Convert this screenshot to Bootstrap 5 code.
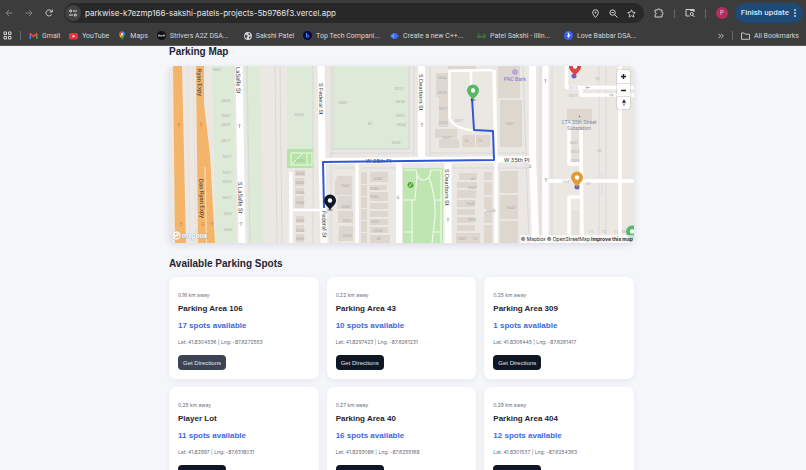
<!DOCTYPE html>
<html lang="en">
<head>
<meta charset="utf-8">
<meta name="viewport" content="width=device-width, initial-scale=1">
<title>Parkwise</title>
<link href="https://cdn.jsdelivr.net/npm/bootstrap@5.3.0/dist/css/bootstrap.min.css" rel="stylesheet">
<style>
body{font-family:"Liberation Sans",Arial,sans-serif;background:#f5f6fa;color:#1f2431}
.chrome{background:#3c3c3c;color:#d6d6d6;font-family:Inter,sans-serif;border-bottom:1px solid #585858}
.chrome svg{display:block;flex:none}
.chrome button{border:0;padding:0;color:inherit;display:block}
.chrome button:not(.avatar):not(.update):not(.tune){background:none}
.bar-top{height:26px;padding:0 3px 0 5px}
.nav-set{gap:12px;padding-right:3px}
.omni{background:#282828;border-radius:10px;height:20px;padding:0 8px 0 1px}
.omni input{background:none;border:0;outline:0;color:#e4e4e4;font-size:8px;line-height:12px;padding:0;min-width:0}
.omni-tools{gap:9px}
.chrome .tune{background:#424242;border-radius:50%;padding:4px}
.side-set{gap:10px;padding-left:10px}
.rule{width:1px;height:9px;background:#686868;flex:none}
.bar-marks .rule{margin:0 -1px}
.avatar{width:12px;height:12px;border-radius:50%;background:#b52d5c;font-size:6px;line-height:12px;text-align:center}
.chrome .update{background:#1f4a75;color:#d3e6fa;border-radius:10px;height:20px;font-family:Roboto,sans-serif;font-size:8px;font-weight:500;padding:0 7px 0 6px;margin-left:-3px;display:flex;align-items:center;gap:5px}
.bar-marks{height:19px;padding:0 7px 0 3px;gap:9px;font-family:Roboto,sans-serif;font-size:7px;line-height:10px}
.bar-marks a{color:#d6d6d6;text-decoration:none;display:flex;align-items:center;gap:4px;white-space:nowrap;flex:none}
.bar-marks a.long{width:78px}
.page{padding-right:3px}
.wrap{max-width:465px}
.page h1,.page h2{font-size:10px;font-weight:700;line-height:12px;margin:0}
.page h1{margin-bottom:8px}
.page h2{margin:15px 0 7px}
.map{border-radius:6px;overflow:hidden;box-shadow:0 2px 6px #1f24311f;background:#ebe8e4}
.map>svg{display:block;width:100%;height:auto}
.map text{font-family:Roboto,sans-serif}
.zoomer{top:4px;right:4px;width:13px;background:#fff;border-radius:3px;box-shadow:0 0 1px 1px #0000001a}
.zoomer button{border:0;background:none;height:13px;padding:0;width:100%;display:flex;align-items:center;justify-content:center}
.zoomer button+button{border-top:1px solid #ddd}
.credit{right:0;bottom:0;background:#ffffffa0;font-size:5px;font-family:Inter,sans-serif;line-height:8px;padding:0 1px;gap:1px}
.credit a{color:#333;text-decoration:none}
.spots{--bs-gutter-x:8px;--bs-gutter-y:8px}
.spot{border:0;border-radius:7px;box-shadow:0 2px 6px #1f24310f;padding:14px 9px 9px;align-items:flex-start}
.tiny{font-family:Inter,sans-serif;font-size:5px;line-height:8px;color:#666b75}
.spot h3{font-size:8px;font-weight:700;line-height:10px;margin:5px 0 7px}
.free{font-weight:700;font-size:8px;line-height:10px;color:#4169dc;margin-bottom:7px}
.go{background:#0f1624;color:#e3e5e9;font-size:6px;line-height:8px;padding:3px 4px;min-width:48px;border-radius:4px;border:0;height:15px;margin-top:9px}
.go:hover{background:#3a414f;color:#fff}
.go.lit{background:#3c4453}
</style>
<script src="https://cdn.jsdelivr.net/npm/bootstrap@5.3.0/dist/js/bootstrap.bundle.min.js"></script>
</head>
<body class="vh-100 overflow-hidden d-flex flex-column">
<header class="chrome flex-shrink-0">
 <div class="bar-top d-flex align-items-center">
  <div class="nav-set d-flex align-items-center">
   <button aria-label="Back"><svg width="8" height="8" viewBox="0 0 8 8" fill="none" stroke="#858585"><path d="M7.5 4H1M4 1L1 4l3 3"/></svg></button>
   <button aria-label="Forward"><svg width="8" height="8" viewBox="0 0 8 8" fill="none" stroke="#858585"><path d="M.5 4H7M4 1l3 3-3 3"/></svg></button>
   <button aria-label="Reload"><svg width="8" height="8" viewBox="0 0 8 8" fill="none" stroke="#cfcfcf"><path d="M6.6 5.3A3 3 0 1 1 6.4 2.2L7 3M7.2.5V3H4.8"/></svg></button>
  </div>
  <div class="omni flex-grow-1 d-flex align-items-center ms-2">
   <button class="tune" aria-label="Site information"><svg width="8" height="8" viewBox="0 0 8 8" fill="none" stroke="#dedede"><circle cx="1.7" cy="2" r="1.1"/><path d="M4 2h4M0 6h4"/><circle cx="6.3" cy="6" r="1.1"/></svg></button>
   <input class="flex-grow-1 ms-1" type="text" aria-label="Address" value="parkwise-k7ezmp166-sakshi-patels-projects-5b9766f3.vercel.app">
   <div class="omni-tools d-flex">
    <button aria-label="Location"><svg width="9" height="9" viewBox="0 0 9 9" fill="none" stroke="#d0d0d0"><path d="M4.500 8.500C3 6.600 1.700 5.200 1.700 3.500a2.800 2.800 0 0 1 5.600 0C7.300 5.200 6 6.600 4.500 8.500z"/><circle cx="4.500" cy="3.500" r=".6"/></svg></button>
    <button aria-label="Zoom"><svg width="9" height="9" viewBox="0 0 9 9" fill="none" stroke="#d0d0d0"><circle cx="3.600" cy="3.600" r="2.700"/><path d="M5.600 5.600l3 3M2.400 3.600h2.400"/></svg></button>
    <button aria-label="Bookmark this page"><svg width="9" height="9" viewBox="0 0 9 9" fill="none" stroke="#d0d0d0" stroke-width=".9"><path d="M4.500.8l1.100 2.500 2.700.2-2 1.900.6 2.700-2.400-1.400-2.400 1.400.6-2.700-2-1.900 2.700-.2z"/></svg></button>
   </div>
  </div>
  <div class="side-set d-flex align-items-center">
   <button aria-label="Extensions"><svg width="10" height="10" viewBox="0 0 10 10" fill="none" stroke="#d0d0d0"><path d="M1 2h2.500a1.200 1.200 0 0 1 2.400 0H8v2.400a1.100 1.100 0 0 1 0 2.200V9H1V6.700c1.600-.2 1.600-2.200 0-2.400z"/></svg></button>
   <span class="rule"></span>
   <button aria-label="Search tabs"><svg width="10" height="10" viewBox="0 0 10 10" fill="none" stroke="#d0d0d0"><path d="M4.500 8H1V1.500h8V4"/><path d="M5.500 1.500h3.500v1H5.500z" fill="#d0d0d0"/><circle cx="6.800" cy="6" r="1.500"/><path d="M7.900 7.200L9.500 9"/></svg></button>
   <span class="rule"></span>
   <button class="avatar" aria-label="Profile">P</button>
   <button class="update">Finish update<svg width="2" height="8" viewBox="0 0 2 8" fill="#d3e6fa"><circle cx="1" cy="1" r=".9"/><circle cx="1" cy="4" r=".9"/><circle cx="1" cy="7" r=".9"/></svg></button>
  </div>
 </div>
 <nav class="bar-marks d-flex align-items-center" aria-label="Bookmarks">
  <button aria-label="Apps"><svg width="9" height="9" viewBox="0 0 9 9" fill="none" stroke="#d0d0d0"><path d="M1 1h2.500v2.500H1zM5.500 1H8v2.500H5.500zM1 5.500h2.500V8H1zM5.500 5.500H8V8H5.500z"/></svg></button>
  <span class="rule"></span>
  <a href="#"><svg width="9" height="8" viewBox="0 0 9 8"><path d="M.5 1.500V7H2V2.500z" fill="#4285f4"/><path d="M8.500 1.500V7H7V2.500z" fill="#34a853"/><path d="M.5 2.500V1.300L1.500.8l3 2.500 3-2.500 1 .5v1.200l-4 3z" fill="#ea4335"/></svg>Gmail</a>
  <a href="#"><svg width="9" height="8" viewBox="0 0 9 8"><rect y="1" width="9" height="6.500" rx="1.600" fill="#e5323b"/><path d="M3.600 2.700v3L6.200 4.200z" fill="#fff"/></svg>YouTube</a>
  <a href="#"><svg width="8" height="9" viewBox="0 0 8 9"><path d="M4 9C3.500 6.700 1 5.500 1 3.200h6C7 5.500 4.500 6.700 4 9z" fill="#34a853"/><path d="M1 3.200A3 3 0 0 1 4 .2V3.200L1.700 5z" fill="#ea4335"/><path d="M4 .2a3 3 0 0 1 3 3H4z" fill="#4285f4"/><path d="M1.500 4.800L4 3l.8 1-2 2.400z" fill="#fbbc04"/><circle cx="4" cy="3.100" r="1.100" fill="#fff"/></svg>Maps</a>
  <a href="#" class="long"><svg width="9" height="9" viewBox="0 0 9 9"><circle cx="4.500" cy="4.500" r="4.500" fill="#111"/><path d="M1.500 5.500V4h1.200v1.500M3.700 4v1.200h1.200V4M6 5.500V4h1.600v.8H6" fill="none" stroke="#ddd" stroke-width=".7"/></svg>Strivers A2Z DSA...</a>
  <a href="#"><svg width="8" height="8" viewBox="0 0 8 8"><circle cx="4" cy="4" r="3.900" fill="#d8dadd"/><path d="M1 2.500l2 .4.800 1.400-1 1L3 7 1 5.500zM4.500.8l2 1-.7 1.400-1.500-.6zM5 4.500l2-.2-.8 2-1.200.5z" fill="#4b4e52"/></svg>Sakshi Patel</a>
  <a href="#" class="long"><svg width="9" height="9" viewBox="0 0 9 9"><circle cx="4.500" cy="4.500" r="4.500" fill="#07093e"/><path d="M3.500 2v4.300" stroke="#4c8df5"/><circle cx="4.700" cy="5.200" r="1.200" fill="none" stroke="#4c8df5" stroke-width=".9"/></svg>Top Tech Compani...</a>
  <a href="#" class="long"><svg width="9" height="8" viewBox="0 0 9 8"><path d="M0 4l3-3h3l3 3-3 3H3z" fill="#3d6bea"/><path d="M1 4l3-2v4z" fill="#79a0fa"/></svg>Create a new C++...</a>
  <a href="#" class="long"><svg width="9" height="8" viewBox="0 0 9 8" fill="none" stroke="#3c8148"><path d="M3.300 2.500A1.800 1.800 0 1 0 4 4.300H.5M5.700 2.500A1.800 1.800 0 1 1 5 4.300h3.500"/></svg>Patel Sakshi - Illin...</a>
  <a href="#" class="long"><svg width="9" height="9" viewBox="0 0 9 9"><circle cx="4.500" cy="4.500" r="4.500" fill="#3d61ee"/><path d="M3.200 1.800h2v2h1.300L4.200 7.500v-2H2.800l1.500-2z" fill="#fff"/></svg>Love Babbar DSA...</a>
  <button class="ms-auto" aria-label="More bookmarks"><svg width="6" height="6" viewBox="0 0 6 6" fill="none" stroke="#d0d0d0" stroke-width=".9"><path d="M.5.8L2.700 3 .5 5.200M3.200.8L5.400 3 3.200 5.200"/></svg></button>
  <span class="rule"></span>
  <a href="#"><svg width="9" height="8" viewBox="0 0 9 8" fill="none" stroke="#d0d0d0" stroke-width=".9"><path d="M.5 1h2.800l1 1.200h4.200V7.300h-8z"/></svg>All Bookmarks</a>
 </nav>
</header>
<main class="page flex-grow-1 overflow-hidden">
<div class="wrap mx-auto">
 <h1>Parking Map</h1>
 <section class="map position-relative" aria-label="Map">
 <svg viewBox="169 66 465 177">
  <rect x="169" y="66" width="465" height="177" fill="#ebe8e4"/>
  <!-- expressway -->
  <g fill="#f4b56b"><path d="M173 66h9l4 177h-11z"/><path d="M196 66h8v38l6 50 5 89h-17z"/></g>
  <path d="M205 167l1.500 76" stroke="#f9d9b0" stroke-width="1.200"/>
  <path d="M187 66l3 177M193 66l3 177" stroke="#f1ddd2" stroke-width="1"/>
  <!-- lawns -->
  <g fill="#dcead7"><path d="M212 66h22l2 177h-20z"/><path d="M245 66h15l3 177h-15z"/><path d="M287 66h26v84h-26z"/><path d="M333 66h77v84h-77z"/></g>
  <path d="M287 149h26v19h-26z" fill="#b5e5a4"/>
  <path d="M291 165l12-12h9v12h-21v-12h12M307 153v12" fill="none" stroke="#eff8ec"/>
  <g fill="none" stroke="#d5d3d9" stroke-width=".8"><path d="M275 66l2 177M280 66l2 177M333 66v84M409 66v84M331 66v177M414 66v90M430 66v90M247 66l3 177M313 66v177M333 149h77M330 153h84M430 153h95M333 168h25M362 168h34M451 168h80M552 66v177M523 66l6 177M599 66v177M606 66v177M602 173v22M540 66v177"/></g>
  <!-- streets -->
  <g fill="none" stroke="#fff" stroke-linejoin="round">
   <path d="M239 66l3 177" stroke-width="7"/><path d="M321 66l1 90 2 87" stroke-width="7"/>
   <path d="M421.500 66v94" stroke-width="7"/><path d="M325 161l208-2" stroke-width="6"/>
   <path d="M357 163v80M494 70l2 90v83M291 172v71" stroke-width="3.500"/><path d="M399 163v80" stroke-width="6"/><path d="M448 163v80" stroke-width="7"/>
   <path d="M532.500 66v90l3 87" stroke-width="7"/><path d="M545.500 66v177" stroke-width="6"/>
   <path d="M291 210h33M449.500 118V71l43-1M449.500 118q3 10 24 12.500M471 71v24" stroke-width="2.500"/>
   <path d="M566.500 66v21.500H634M581 87v8h53M620 66v177M545 181h89M569 120v44h12M581 130l1 113M569 243v-46h13" stroke-width="3.500"/>
  </g>
  <!-- buildings -->
  <g fill="#ddd7d0">
   <path d="M436 73h12v24h-12zM439 97h9v30h-9zM435 129h22v9h-22zM439 139h20v9h-20zM462 135h13v12h-13zM476 135h14v12h-14zM448 66h28v3h-28zM498 66h22v32h-22zM500 100h22v47h-22zM567 109h25v12h-25zM500 171h18v22h-18zM500 195h18v24h-18zM500 221h18v22h-18z"/>
   <path d="M337 176h15v19h-17v-13zM338 196h14v13h-15zM338 211h15v12h-15zM339 226h14v15h-15zM361 172h6v12h-6zM361 185h6v11h-6zM361 197h6v11h-6zM361 209h6v11h-6zM361 221h6v11h-6zM361 233h6v10h-6zM370 172h18v10h-18zM370 185h17v5h-17zM370 192h18v9h-18zM370 203h18v6h-18zM370 211h18v6h-18zM370 219h18v6h-18zM370 227h18v6h-18zM370 235h20v8h-20z"/>
   <path d="M459 173h18v7h-18zM457 182h20v6h-20zM457 190h19v8h-19zM457 200h18v7h-18zM457 209h18v6h-18zM457 217h18v6h-18zM457 225h18v6h-18zM456 233h24v10h-24zM484 172h8v8h-8zM484 182h8v13h-8zM484 197h8v12h-8zM484 211h8v12h-8zM484 225h8v18h-8zM295 170h10v6h-10zM295 178h9v8h-9zM295 188h9v6h-9zM295 196h9v12h-9zM296 216h8v7h-8zM296 225h8v7h-8zM296 234h8v8h-8z"/>
   <path d="M572 128h7v34h-7zM572 210h7v33h-7z" opacity=".5"/>
  </g>
  <!-- park -->
  <path d="M403 168h40v75h-40z" fill="#bfe6b0"/>
  <path d="M404 170h12q1 10 7.500 10t7.500-10h11M417 175l-2 25h-12M429 177q7 20 6 40l-3 26M412 200v43M404 232h8M442 200h-7M442 232h-8M441 170v73" fill="none" stroke="#eef8ea" stroke-width="1.200"/>
  <circle cx="410.500" cy="185" r="3" fill="#55a63c"/><path d="M409 187l3-4" stroke="#dff2d7" stroke-width=".9"/>
  <!-- house numbers -->
  <g font-size="4" fill="#b0ada7" text-anchor="middle">
   <text x="217" y="71">3501</text><text x="226" y="102">3505</text><text x="226" y="117">3507</text><text x="226" y="126">3509</text><text x="226" y="142">3511</text><text x="227" y="158">3517</text><text x="227" y="174">3521</text><text x="227" y="183">3523</text><text x="227" y="199">3527</text><text x="228" y="215">3531</text><text x="228" y="231">3535</text>
   <text x="299" y="116">3520</text><text x="300" y="162">3532</text><text x="300" y="175">3538</text><text x="300" y="184">3542</text><text x="300" y="194">3544</text><text x="300" y="204">3548</text><text x="300" y="222">3552</text><text x="300" y="232">3554</text><text x="300" y="240">3556</text>
   <text x="343" y="104">3507</text><text x="370" y="125">47</text><text x="399" y="90">3512</text><text x="400" y="103">3518</text><text x="400" y="117">3522</text><text x="401" y="126">3524</text><text x="396" y="144">3526</text>
   <text x="442" y="79">3504</text><text x="442" y="94">3510</text><text x="443" y="110">3517</text><text x="443" y="124">3525</text><text x="447" y="139">3527</text><text x="459" y="122">3517</text><text x="466" y="142">14</text><text x="480" y="142">10</text><text x="510" y="125">3501</text>
   <text x="346" y="187">3541</text><text x="346" y="208">3549</text><text x="347" y="222">3551</text><text x="347" y="237">3555</text><text x="378" y="180">3540</text><text x="374" y="190">3544</text><text x="374" y="198">3546</text><text x="375" y="223">3552</text><text x="378" y="232">3554</text><text x="379" y="240">41</text>
   <text x="473" y="180">42</text><text x="472" y="189">3543</text><text x="471" y="205">3547</text><text x="472" y="221">3553</text><text x="462" y="240">3557</text><text x="475" y="240">16</text><text x="491" y="212">3548</text><text x="511" y="209">3547</text><text x="573" y="89">3515</text><text x="573" y="97">3517</text><text x="574" y="144">3521</text><text x="575" y="153">3523</text><text x="575" y="162">3525</text><text x="567" y="183">3541</text><text x="588" y="185">10</text><text x="591" y="233">11</text><text x="604" y="233">12</text><text x="616" y="233">17</text><text x="623" y="233">18</text><text x="597" y="80">10</text><text x="599" y="152">10</text>
  </g>
  <g fill="none" stroke="#a9a9a9" stroke-width=".8"><path d="M239.500 128v-4m-1.500 1.500l1.500-1.500 1.500 1.500M422 127v-4m-1.500 1.500l1.500-1.500 1.500 1.500M398 195v4m-1.500-1.500l1.500 1.500 1.500-1.500M448 222v-4m-1.500 1.500l1.500-1.500 1.500 1.500M530 164v4m-1.500-1.500l1.500 1.500 1.500-1.500M546 182v-4m-1.500 1.500l1.500-1.500 1.500 1.500M545.500 83v-4m-1.500 1.500l1.500-1.500 1.500 1.500M241 226v-4m-1.500 1.500l1.500-1.500 1.500 1.500M590 87.500h-4m1.500-1.500l-1.500 1.500 1.500 1.500M609 95h4m-1.500-1.500l1.500 1.500-1.500 1.500"/><path stroke="#ca9256" d="M179 127v-4m-1.500 1.500l1.500-1.500 1.500 1.500M201 127v-4m-1.500 1.500l1.500-1.500 1.500 1.500M181 226v-4m-1.500 1.500l1.500-1.500 1.500 1.500M203 222v4m-1.500-1.500l1.500 1.500 1.500-1.500M212 226v-4m-1.500 1.500l1.500-1.500 1.500 1.500"/></g>
  <!-- street names -->
  <g font-size="6" fill="#3c3f47">
   <text transform="translate(197 69) rotate(88)">Ryan Expy</text><text transform="translate(199 179) rotate(88)">Dan Ryan Expy</text>
   <text transform="translate(236 67) rotate(89)">LaSalle St</text><text transform="translate(238 182) rotate(89)">S LaSalle St</text>
   <text transform="translate(319 83) rotate(90)">S Federal St</text><text transform="translate(322 211) rotate(89)">Federal St</text>
   <text transform="translate(419 74) rotate(90)">S Dearborn St</text><text transform="translate(445 169) rotate(90)">S Dearborn St</text>
   <text x="366" y="163">W 35th Pl</text><text x="504" y="162">W 35th Pl</text>
  </g>
  <g font-size="5" text-anchor="middle"><text x="579" y="124" fill="#7987a0">CTA 35th Street</text><text x="579" y="130" fill="#7987a0">Substation</text><text x="515" y="81" fill="#8c6ce0">PNC Bank</text></g>
  <circle cx="515" cy="72" r="2.200" fill="none" stroke="#9a7be8"/><circle cx="579.500" cy="116.500" r=".7" fill="#666"/><path d="M514 72h2" stroke="#9a7be8"/>
  <path d="M324 208l-1-46 171-2-1-29-19-1-2-32" fill="none" stroke="#3157d8" stroke-width="2" stroke-linejoin="round"/>
  <circle cx="577" cy="187" r="2.500" fill="#7260c4"/><circle cx="574" cy="76" r="2.500" fill="#7260c4"/>
  <!-- markers -->
  <defs><path id="pin" d="M0 0C-1.500-3-6-5.500-6-9.500a6 6 0 0 1 12 0C6-5.500 1.500-3 0 0z"/></defs>
  <ellipse cx="473" cy="100" rx="3" ry="1" opacity=".3"/><ellipse cx="330" cy="210" rx="3" ry="1" opacity=".3"/>
  <use href="#pin" x="473" y="100" fill="#55b966"/><circle cx="473" cy="90.500" r="2.200" fill="#fff"/>
  <use href="#pin" x="330" y="210" fill="#101725"/><circle cx="330" cy="200.500" r="2.200" fill="#fff"/>
  <use href="#pin" x="577" y="187" fill="#e29a37"/><circle cx="577" cy="177.500" r="2.200" fill="#fff"/>
  <use href="#pin" x="575" y="76" fill="#dc4343"/><circle cx="575" cy="66.500" r="2.200" fill="#fff"/>
  <use href="#pin" x="632" y="241" fill="#55b966"/><circle cx="632" cy="231.500" r="2.200" fill="#fff"/>
  <g fill="none" stroke="#fff"><circle cx="176.500" cy="235.500" r="4.300" stroke="#999" stroke-width=".5"/><circle cx="176.500" cy="235.500" r="3.500" stroke-width="1.300"/></g><path d="M175 237q0-4 3.500-3.500.5 3.500-3.500 3.500z" fill="#fff"/>
  <text x="182" y="237.500" font-size="7" font-weight="700" fill="#fff" stroke="#999" stroke-width=".6" paint-order="stroke">mapbox</text>
 </svg>
 <div class="zoomer position-absolute">
  <button aria-label="Zoom in"><svg width="7" height="7" viewBox="0 0 7 7" stroke="#222" stroke-width="1.500"><path d="M3.500 1v5M1 3.500h5"/></svg></button>
  <button aria-label="Zoom out"><svg width="7" height="7" viewBox="0 0 7 7" stroke="#222" stroke-width="1.500"><path d="M1 3.500h5"/></svg></button>
  <button aria-label="Reset north"><svg width="6" height="8" viewBox="0 0 6 8"><path d="M1 3.700L3 .3l2 3.400z" fill="#222"/><path d="M1.200 4.500L3 7.500l1.800-3z" fill="#aaa"/></svg></button>
 </div>
 <div class="credit position-absolute d-flex"><a href="#">© Mapbox</a><a href="#">© OpenStreetMap</a><a href="#" class="fw-bold">Improve this map</a></div>
 </section>
 <h2>Available Parking Spots</h2>
 <div class="row spots">
  <div class="col-4"><article class="card spot"><div class="tiny">0.16 km away</div><h3>Parking Area 106</h3><div class="free">17 spots available</div><div class="tiny">Lat: 41.8304536 | Lng: -87.6272553</div><button class="go lit">Get Directions</button></article></div>
  <div class="col-4"><article class="card spot"><div class="tiny">0.22 km away</div><h3>Parking Area 43</h3><div class="free">10 spots available</div><div class="tiny">Lat: 41.8297423 | Lng: -87.6261231</div><button class="go">Get Directions</button></article></div>
  <div class="col-4"><article class="card spot"><div class="tiny">0.25 km away</div><h3>Parking Area 309</h3><div class="free">1 spots available</div><div class="tiny">Lat: 41.8306445 | Lng: -87.6261417</div><button class="go">Get Directions</button></article></div>
  <div class="col-4"><article class="card spot"><div class="tiny">0.25 km away</div><h3>Player Lot</h3><div class="free">11 spots available</div><div class="tiny">Lat: 41.82997 | Lng: -87.6318031</div><button class="go" aria-label="Get Directions"></button></article></div>
  <div class="col-4"><article class="card spot"><div class="tiny">0.27 km away</div><h3>Parking Area 40</h3><div class="free">16 spots available</div><div class="tiny">Lat: 41.8293086 | Lng: -87.6255168</div><button class="go" aria-label="Get Directions"></button></article></div>
  <div class="col-4"><article class="card spot"><div class="tiny">0.29 km away</div><h3>Parking Area 404</h3><div class="free">12 spots available</div><div class="tiny">Lat: 41.8301537 | Lng: -87.6254363</div><button class="go" aria-label="Get Directions"></button></article></div>
 </div>
</div>
</main>
</body>
</html>
